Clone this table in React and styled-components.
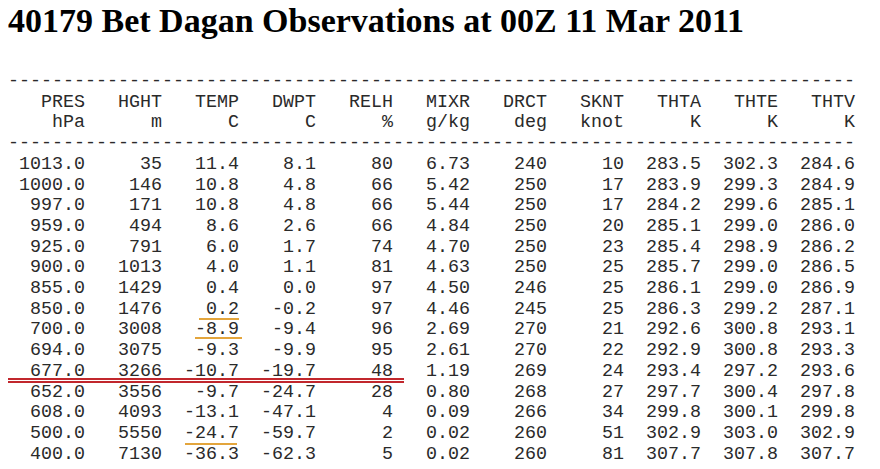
import React from 'react';
import styled, { createGlobalStyle } from 'styled-components';

const GlobalStyle = createGlobalStyle`
body {
  margin: 8px;
  background: #fff;
}
`

const Title = styled.h2`
font-family: "Liberation Serif", "Times New Roman", serif;
font-weight: bold;
font-size: 34px;
line-height: 37px;
color: #000;
margin: -6px 0 33px 0;
`

const Sounding = styled.div`
font-family: "Liberation Mono", "Courier New", monospace;
font-size: 18.333px;
line-height: 20.7px;
color: #2a2a2a;
`

const Row = styled.div`
white-space: pre;
position: relative;
${props => props.$cut && `
  &::after {
    content: '';
    position: absolute;
    left: -8px;
    width: 404px;
    top: 16px;
    height: 1px;
    background: #fff;
    border-top: 2px solid #c1272d;
    border-bottom: 2px solid #c1272d;
  }
`}
`

const Mark = styled.span`
position: relative;
&::after {
  content: '';
  position: absolute;
  left: ${props => props.$l}px;
  right: ${props => props.$r}px;
  bottom: ${props => props.$b}px;
  height: 2px;
  background: #e3a53c;
}
`

const rule = '-'.repeat(77);
const heads = ['PRES', 'HGHT', 'TEMP', 'DWPT', 'RELH', 'MIXR', 'DRCT', 'SKNT', 'THTA', 'THTE', 'THTV'];
const units = ['hPa', 'm', 'C', 'C', '%', 'g/kg', 'deg', 'knot', 'K', 'K', 'K'];

const rows = [
  ['1013.0', '35', '11.4', '8.1', '80', '6.73', '240', '10', '283.5', '302.3', '284.6'],
  ['1000.0', '146', '10.8', '4.8', '66', '5.42', '250', '17', '283.9', '299.3', '284.9'],
  ['997.0', '171', '10.8', '4.8', '66', '5.44', '250', '17', '284.2', '299.6', '285.1'],
  ['959.0', '494', '8.6', '2.6', '66', '4.84', '250', '20', '285.1', '299.0', '286.0'],
  ['925.0', '791', '6.0', '1.7', '74', '4.70', '250', '23', '285.4', '298.9', '286.2'],
  ['900.0', '1013', '4.0', '1.1', '81', '4.63', '250', '25', '285.7', '299.0', '286.5'],
  ['855.0', '1429', '0.4', '0.0', '97', '4.50', '246', '25', '286.1', '299.0', '286.9'],
  ['850.0', '1476', '0.2', '-0.2', '97', '4.46', '245', '25', '286.3', '299.2', '287.1'],
  ['700.0', '3008', '-8.9', '-9.4', '96', '2.69', '270', '21', '292.6', '300.8', '293.1'],
  ['694.0', '3075', '-9.3', '-9.9', '95', '2.61', '270', '22', '292.9', '300.8', '293.3'],
  ['677.0', '3266', '-10.7', '-19.7', '48', '1.19', '269', '24', '293.4', '297.2', '293.6'],
  ['652.0', '3556', '-9.7', '-24.7', '28', '0.80', '268', '27', '297.7', '300.4', '297.8'],
  ['608.0', '4093', '-13.1', '-47.1', '4', '0.09', '266', '34', '299.8', '300.1', '299.8'],
  ['500.0', '5550', '-24.7', '-59.7', '2', '0.02', '260', '51', '302.9', '303.0', '302.9'],
  ['400.0', '7130', '-36.3', '-62.3', '5', '0.02', '260', '81', '307.7', '307.8', '307.7'],
];

// hand-drawn underlines on the TEMP column, keyed row-col
const marks = {
  '7-2': { l: -7, r: 0, b: 0 },
  '8-2': { l: 0, r: -3, b: 1 },
  '13-2': { l: 1, r: 2, b: -1 },
};

const line = cells => cells.map(c => c.padStart(7)).join('');

function DataRow({ cells, index }) {
  return (
    <Row $cut={cells[0] === '677.0'}>
      {cells.map((c, j) => {
        const m = marks[`${index}-${j}`];
        const pad = ' '.repeat(7 - c.length);
        if (!m) return pad + c;
        return (
          <React.Fragment key={j}>
            {pad}
            <Mark $l={m.l} $r={m.r} $b={m.b}>{c}</Mark>
          </React.Fragment>
        );
      })}
    </Row>
  );
}

export default function App() {
  return (
    <>
      <GlobalStyle />
      <Title>40179 Bet Dagan Observations at 00Z 11 Mar 2011</Title>
      <Sounding>
        <Row>{rule}</Row>
        <Row>{line(heads)}</Row>
        <Row>{line(units)}</Row>
        <Row>{rule}</Row>
        {rows.map((r, i) => <DataRow key={i} cells={r} index={i} />)}
      </Sounding>
    </>
  );
}
